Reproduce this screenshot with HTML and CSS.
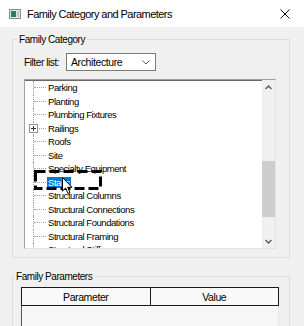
FILE: index.html
```html
<!DOCTYPE html>
<html lang="en">
<head>
    <meta charset="UTF-8">
    <meta name="viewport" content="width=device-width, initial-scale=1.0">
    <title>Family Category and Parameters</title>
    <link rel="stylesheet" href="styles.css">
</head>
<body>
    <div class="titlebar">
        <svg class="app-icon" width="12" height="10" viewBox="0 0 12 10">
            <rect x="0.5" y="0.5" width="11" height="9" fill="#dfe6ea" stroke="#8a8a8a"/>
            <rect x="2" y="2" width="5" height="6" fill="#2f7d64"/>
            <rect x="8" y="2" width="2" height="6" fill="#b8cad6"/>
        </svg>
        <span class="title">Family Category and Parameters</span>
        <svg class="close" width="10" height="10" viewBox="0 0 10 10">
            <path d="M0.5 0.5 L9.5 9.5 M9.5 0.5 L0.5 9.5" stroke="#111" stroke-width="1"/>
        </svg>
    </div>

    <div class="content">
        <fieldset class="group">
            <legend>Family Category</legend>
            <div class="filter-row">
                <label class="filter-label">Filter list:</label>
                <div class="select">
                    <span>Architecture</span>
                    <svg class="chevron" width="8" height="5" viewBox="0 0 8 5">
                        <polyline points="0.5,0.5 4,4 7.5,0.5" fill="none" stroke="#555" stroke-width="1"/>
                    </svg>
                </div>
            </div>

            <div class="listbox">
                <ul class="tree">
                    <li><span class="branch"></span><span class="node">Parking</span></li>
                    <li><span class="branch"></span><span class="node">Planting</span></li>
                    <li><span class="branch"></span><span class="node">Plumbing Fixtures</span></li>
                    <li>
                        <span class="branch">
                            <svg class="plus" width="9" height="9" viewBox="0 0 9 9">
                                <rect x="0.5" y="0.5" width="8" height="8" fill="#fff" stroke="#919191"/>
                                <path d="M2 4.5 H7 M4.5 2 V7" stroke="#333" stroke-width="1"/>
                            </svg>
                        </span><span class="node">Railings</span>
                    </li>
                    <li><span class="branch"></span><span class="node">Roofs</span></li>
                    <li><span class="branch"></span><span class="node">Site</span></li>
                    <li><span class="branch"></span><span class="node">Specialty Equipment</span></li>
                    <li><span class="branch"></span><span class="node selected">Stairs</span></li>
                    <li><span class="branch"></span><span class="node">Structural Columns</span></li>
                    <li><span class="branch"></span><span class="node">Structural Connections</span></li>
                    <li><span class="branch"></span><span class="node">Structural Foundations</span></li>
                    <li><span class="branch"></span><span class="node">Structural Framing</span></li>
                    <li><span class="branch"></span><span class="node">Structural Stiffeners</span></li>
                </ul>
                <div class="scrollbar">
                    <div class="sb-button">
                        <svg width="7" height="5" viewBox="0 0 7 5">
                            <polyline points="0.5,4 3.5,1 6.5,4" fill="none" stroke="#606060" stroke-width="1.5"/>
                        </svg>
                    </div>
                    <div class="sb-track"><div class="sb-thumb"></div></div>
                    <div class="sb-button">
                        <svg width="7" height="5" viewBox="0 0 7 5">
                            <polyline points="0.5,1 3.5,4 6.5,1" fill="none" stroke="#606060" stroke-width="1.5"/>
                        </svg>
                    </div>
                </div>

                <!-- highlight drawn over the selected node -->
                <svg class="focus-box" width="68" height="20" viewBox="0 0 68 20">
                    <rect x="1.5" y="1.5" width="65" height="17" fill="none" stroke="#000" stroke-width="3" stroke-dasharray="10 4"/>
                </svg>
                <svg class="cursor" width="12" height="18" viewBox="0 0 12 18">
                    <path d="M0.5 0.5 L0.5 14 L3.6 11 L6 16.5 L8 15.6 L5.7 10.3 L10 10.3 Z" fill="#fff" stroke="#000" stroke-width="1"/>
                </svg>
            </div>
        </fieldset>

        <fieldset class="group params">
            <legend>Family Parameters</legend>
            <table class="param-table">
                <tr>
                    <th>Parameter</th>
                    <th>Value</th>
                </tr>
                <tr>
                    <td colspan="2"></td>
                </tr>
            </table>
        </fieldset>
    </div>
</body>
</html>
```

FILE: styles.css
```css
body {
    margin: 0;
    width: 304px;
    height: 326px;
    overflow: hidden;
    background-color: #f0f0f0;
    font-family: "Liberation Sans", Arial, sans-serif;
    color: #000;
}
.titlebar {
    display: flex;
    align-items: center;
    height: 27px;
    padding-left: 9px;
    background-color: #fff;
}
.app-icon {
    display: block;
}
.title {
    margin-left: 6px;
    font-size: 11px;
    letter-spacing: -0.55px;
}
.close {
    display: block;
    margin-left: auto;
    margin-right: 14px;
}
.content {
    padding: 6px 14px 0 12px;
}
.group {
    margin: 0;
    padding: 7px 13px 8px 11px;
    border: 1px solid #dcdcdc;
    min-width: 0;
}
.group legend {
    margin-left: -7px;
    padding: 0 2px;
    font-size: 10px;
    line-height: 13px;
    letter-spacing: -0.45px;
}
.filter-row {
    display: flex;
    align-items: center;
    height: 18px;
    white-space: nowrap;
}
.filter-label {
    width: 42px;
    font-size: 10px;
    letter-spacing: -0.4px;
}
.select {
    display: flex;
    align-items: center;
    box-sizing: border-box;
    width: 90px;
    height: 18px;
    padding-left: 4px;
    border: 1px solid #7a7a7a;
    background-color: #fff;
    font-size: 10.5px;
    letter-spacing: -0.4px;
}
.chevron {
    display: block;
    margin-left: auto;
    margin-right: 5px;
}
.listbox {
    position: relative;
    display: flex;
    box-sizing: border-box;
    height: 170px;
    margin-top: 8px;
    border-top: 1px solid #a0a0a0;
    border-left: 1px solid #a0a0a0;
    border-right: 1px solid #e3e3e3;
    border-bottom: 1px solid #e3e3e3;
    box-shadow: inset 0 1px 0 #696969;
    background-color: #fff;
}
.tree {
    flex: 1;
    margin: 0;
    padding: 1px 0 0 8px;
    list-style: none;
    overflow: hidden;
    font-size: 9.5px;
    letter-spacing: -0.45px;
}
.tree li {
    display: flex;
    align-items: center;
    height: 13.5px;
    white-space: nowrap;
}
.branch {
    position: relative;
    display: flex;
    align-items: center;
    align-self: stretch;
    width: 13px;
    border-left: 1px dotted #a0a0a0;
}
.branch::after {
    content: '';
    width: 12px;
    border-top: 1px dotted #a0a0a0;
}
.plus {
    position: absolute;
    left: -5px;
    top: 2px;
}
.node {
    padding: 0 1px;
    line-height: 11px;
}
.node.selected {
    background-color: #0078d7;
    color: #fff;
}
.scrollbar {
    display: flex;
    flex-direction: column;
    width: 13px;
    background-color: #f0f0f0;
}
.sb-button {
    display: flex;
    align-items: center;
    justify-content: center;
    height: 14px;
}
.sb-track {
    flex: 1;
}
.sb-thumb {
    height: 56px;
    margin-top: 67px;
    background-color: #cdcdcd;
}
.focus-box {
    position: absolute;
    left: 9px;
    top: 90px;
}
.cursor {
    position: absolute;
    left: 37px;
    top: 97px;
}
.params {
    margin-top: 12px;
    padding: 4px 11px 0 8px;
}
.param-table {
    width: 258px;
    table-layout: fixed;
    border-collapse: collapse;
    font-size: 10.5px;
    letter-spacing: -0.4px;
}
.param-table th {
    width: 50%;
    height: 17px;
    padding: 0;
    border: 1.5px solid #1a1a1a;
    background-color: #f9f9f9;
    font-weight: normal;
}
.param-table td {
    height: 22px;
    border-left: 1px solid #555;
    border-right: 1px solid #e3e3e3;
    background-color: #f7f7f7;
}
```
